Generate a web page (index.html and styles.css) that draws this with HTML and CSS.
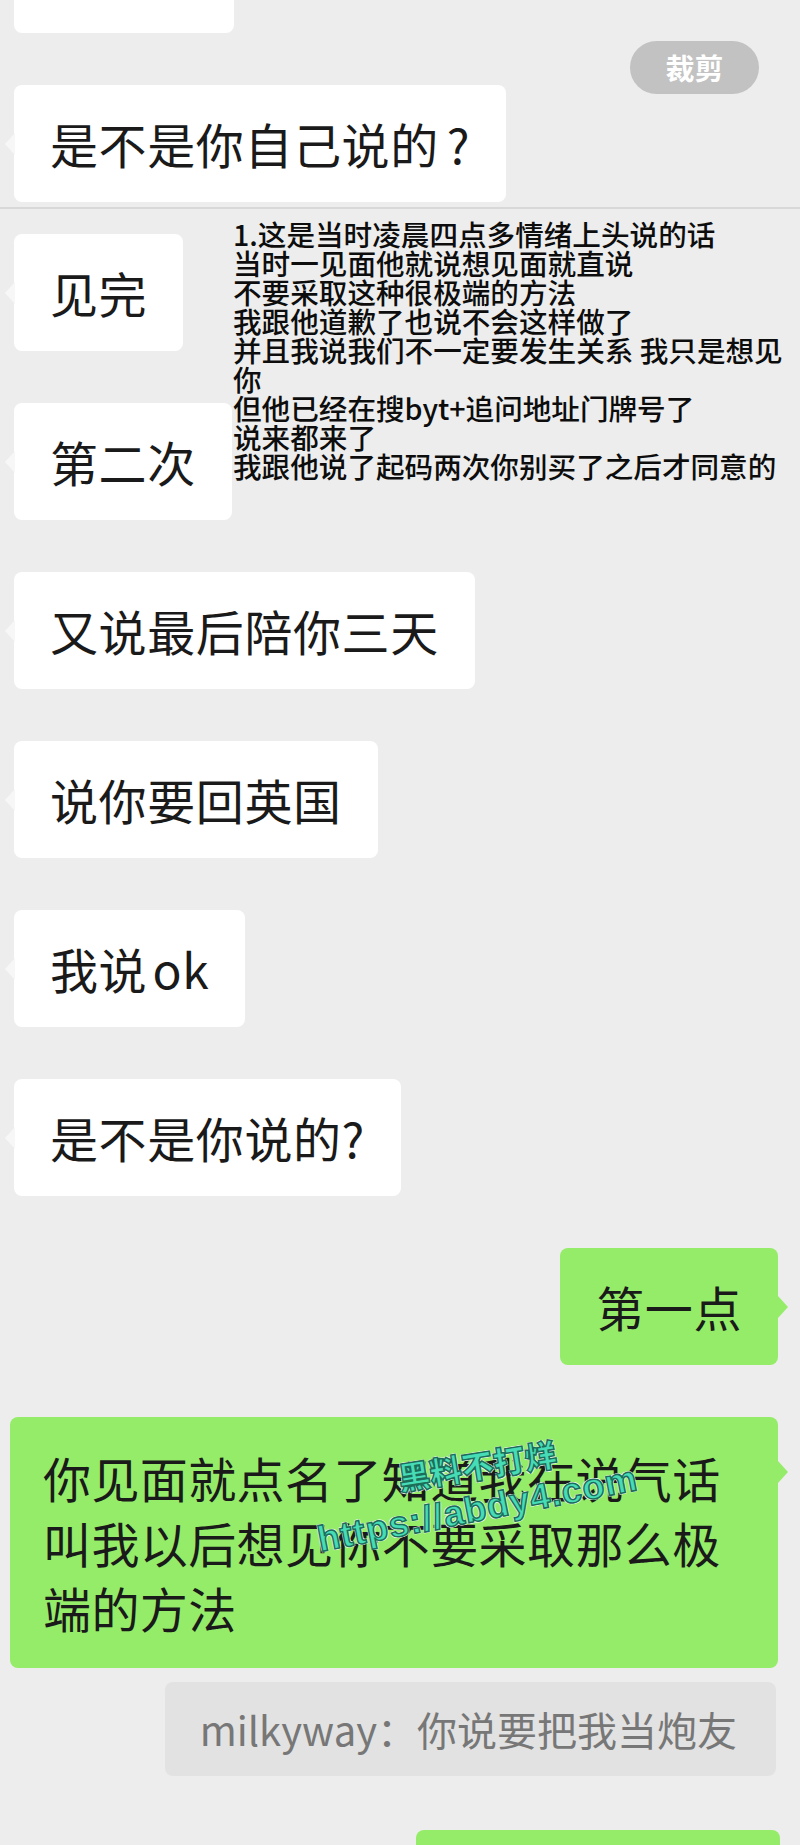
FILE: index.html
```html
<!DOCTYPE html>
<html lang="zh-CN">
<head>
    <meta charset="UTF-8">
    <meta name="viewport" content="width=device-width, initial-scale=1.0">
    <title>聊天记录</title>
    <link rel="stylesheet" href="styles.css">
</head>
<body>
    <div class="chat">
        <div class="row top"><div class="bubble partial"></div></div>
        <div class="row first"><div class="bubble">是不是你自己说的<span class="q">?</span></div></div>
        <div class="seam"></div>
        <div class="row after-seam"><div class="bubble">见完</div></div>
        <div class="row"><div class="bubble">第二次</div></div>
        <div class="row"><div class="bubble">又说最后陪你三天</div></div>
        <div class="row"><div class="bubble">说你要回英国</div></div>
        <div class="row"><div class="bubble tight">我说 ok</div></div>
        <div class="row"><div class="bubble">是不是你说的?</div></div>
        <div class="row mine"><div class="bubble green">第一点</div></div>
        <div class="row mine"><div class="bubble green long">你见面就点名了知道我在说气话叫我以后想见你不要采取那么极端的方法</div></div>
        <div class="row mine quote-row"><div class="quote">milkyway：你说要把我当炮友</div></div>
        <div class="row mine last"><div class="bubble green cut"></div></div>
    </div>

    <!-- overlays on top of the screenshot -->
    <div class="crop-btn">裁剪</div>

    <div class="note">1.这是当时凌晨四点多情绪上头说的话<br>当时一见面他就说想见面就直说<br>不要采取这种很极端的方法<br>我跟他道歉了也说不会这样做了<br>并且我说我们不一定要发生关系 我只是想见<br>你<br>但他已经在搜byt+追问地址门牌号了<br>说来都来了<br>我跟他说了起码两次你别买了之后才同意的</div>

    <div class="watermark wm-name">黑料不打烊</div>
    <div class="watermark wm-url">https://abdy4.com</div>
</body>
</html>
```

FILE: styles.css
```css
html, body {
    margin: 0;
    padding: 0;
    overflow: hidden;
}

body {
    width: 800px;
    height: 1845px;
    position: relative;
    background-color: #ededed;
    font-family: "Noto Sans CJK SC", "Noto Sans", sans-serif;
    color: #1a1a1a;
}

.chat {
    padding: 0 22px 0 14px;
}

.row {
    display: flex;
    margin-top: 52px;
}

.row.top {
    margin-top: 0;
}

.row.after-seam {
    margin-top: 25px;
}

.row.mine {
    justify-content: flex-end;
}

.bubble {
    position: relative;
    background-color: #ffffff;
    font-size: 48px;
    line-height: 65px;
    letter-spacing: 0.6px;
    padding: 26px 36px;
    border-radius: 8px;
}

.bubble .q {
    padding-left: 8px;
}

.bubble.tight {
    word-spacing: -6px;
}

/* little tail on the left of incoming bubbles */
.bubble::before {
    content: "";
    position: absolute;
    left: -9px;
    top: 50%;
    margin-top: -11px;
    border-top: 11px solid transparent;
    border-bottom: 11px solid transparent;
    border-right: 10px solid #f7f7f7;
}

.bubble.green {
    background-color: #95ec69;
}

.bubble.green::before {
    left: auto;
    right: -10px;
    border-right: none;
    border-left: 10px solid #95ec69;
}

.bubble.long {
    margin-left: -4px;
    padding: 28px 33px;
    letter-spacing: 0.4px;
}

.bubble.long::before {
    top: 55px;
}

.bubble.partial {
    width: 220px;
    height: 33px;
    padding: 0;
    border-radius: 0 0 8px 8px;
}

.bubble.partial::before,
.bubble.cut::before {
    display: none;
}

.bubble.cut {
    width: 364px;
    height: 65px;
    margin-right: -2px;
    padding: 26px 0;
}

.row.last {
    margin-top: 54px;
}

.seam {
    height: 2px;
    margin: 5px -22px 0 -14px;
    background-color: #d8d8d8;
}

.quote-row {
    margin-top: 14px;
}

.quote {
    background-color: #e2e2e2;
    color: #777777;
    font-size: 40px;
    line-height: 58px;
    padding: 18px 39px 18px 35px;
    margin-right: 2px;
    border-radius: 8px;
}

.crop-btn {
    position: absolute;
    left: 630px;
    top: 41px;
    width: 129px;
    height: 53px;
    line-height: 53px;
    text-align: center;
    border-radius: 27px;
    background-color: #c2c2c2;
    color: #ffffff;
    font-size: 29px;
    font-weight: bold;
}

.note {
    position: absolute;
    left: 233px;
    top: 219px;
    font-size: 28.6px;
    line-height: 29px;
    font-weight: 500;
    color: #0d0d0d;
    white-space: nowrap;
}

.watermark {
    position: absolute;
    color: #46dcb6;
    font-weight: 900;
    white-space: nowrap;
    -webkit-text-stroke: 1.5px #1b6e59;
    text-shadow: 1px 1px 0 #ffffff, -1px -1px 0 #ffffff, 1px -1px 0 #ffffff, -1px 1px 0 #ffffff;
    transform-origin: 0 50%;
}

.wm-name {
    left: 398px;
    top: 1460px;
    font-size: 32px;
    line-height: 34px;
    transform: rotate(-9deg);
}

.wm-url {
    left: 318px;
    top: 1522px;
    font-family: "Liberation Sans", Arial, sans-serif;
    font-weight: bold;
    font-size: 36px;
    line-height: 36px;
    letter-spacing: 1px;
    transform: rotate(-11deg);
}
```
